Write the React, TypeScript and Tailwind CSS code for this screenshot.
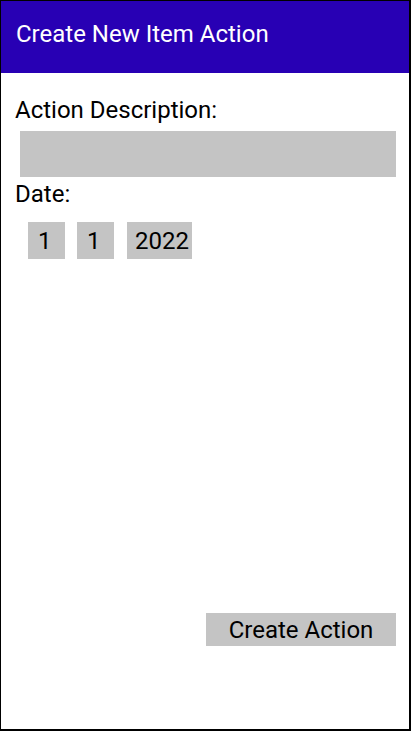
import React from "react";

export default function App() {
  return (
    <div
      className="w-[411px] h-[731px] bg-white border-t border-l border-r-2 border-b-2 border-black flex flex-col"
      style={{ fontFamily: "Roboto, 'Noto Sans', sans-serif" }}
    >
      <div className="h-[72px] bg-[#2800b4] text-white text-[24px] leading-[24px] pl-[15px] pt-[21px]">
        Create New Item Action
      </div>
      <div className="flex flex-col flex-1">
        <div className="text-[24px] leading-[24px] text-black pl-[14px] mt-[25px]">Action Description:</div>
        <div className="ml-[19px] w-[376px] h-[46px] bg-[#c4c4c4] mt-[9px]" />
        <div className="text-[24px] leading-[24px] text-black pl-[14px] mt-[5px]">Date:</div>
        <div className="flex gap-3 ml-[27px] mt-[16px]">
          <div className="w-[37px] h-[37px] bg-[#c4c4c4] flex items-center pl-[10px] pt-px text-[24px] leading-none">1</div>
          <div className="w-[37px] h-[37px] bg-[#c4c4c4] flex items-center pl-[10px] pt-px text-[24px] leading-none">1</div>
          <div className="w-[65px] h-[37px] bg-[#c4c4c4] flex items-center pl-[8px] pt-px text-[24px] leading-none ml-px">2022</div>
        </div>
        <div className="flex-1" />
        <div className="flex justify-end pr-[13px] mb-[83px]">
          <button className="w-[190px] h-[33px] bg-[#c4c4c4] text-[24px] leading-none text-black">Create Action</button>
        </div>
      </div>
    </div>
  );
}
